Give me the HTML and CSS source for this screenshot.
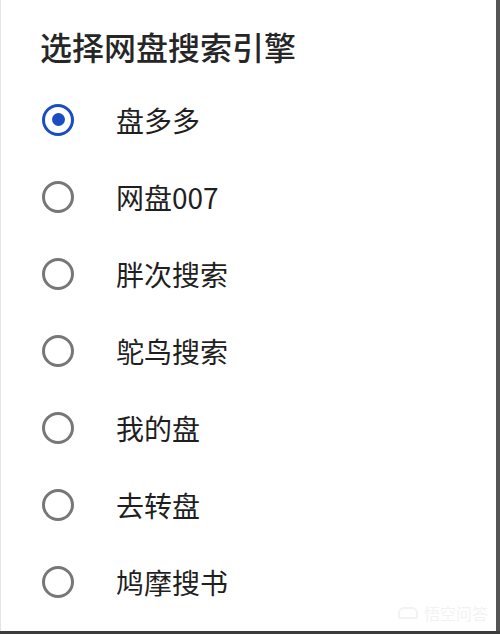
FILE: index.html
```html
<!DOCTYPE html>
<html lang="zh">
<head>
<meta charset="utf-8">
<link rel="stylesheet" href="styles.css">
</head>
<body>
<div class="frame">
  <div class="dialog">
    <h1 class="title">选择网盘搜索引擎</h1>
    <ul class="options">
      <li class="option"><span class="radio checked"></span><span class="label">盘多多</span></li>
      <li class="option"><span class="radio"></span><span class="label">网盘007</span></li>
      <li class="option"><span class="radio"></span><span class="label">胖次搜索</span></li>
      <li class="option"><span class="radio"></span><span class="label">鸵鸟搜索</span></li>
      <li class="option"><span class="radio"></span><span class="label">我的盘</span></li>
      <li class="option"><span class="radio"></span><span class="label">去转盘</span></li>
      <li class="option"><span class="radio"></span><span class="label">鸠摩搜书</span></li>
    </ul>
    <div class="watermark"><span class="wm-icon"></span>悟空问答</div>
  </div>
  <div class="edge"></div>
</div>
</body>
</html>
```
FILE: styles.css
```css
html, body {
  margin: 0;
  padding: 0;
  background: #ffffff;
}
body {
  width: 500px;
  height: 634px;
  overflow: hidden;
  font-family: "Noto Sans CJK SC", "Noto Sans", sans-serif;
  color: #1f1f1f;
}
.frame {
  display: flex;
  width: 500px;
  height: 634px;
  box-sizing: border-box;
  border-bottom: 3px solid #3c3c3c;
}
.dialog {
  position: relative;
  flex: 1;
  background: #ffffff;
  border-left: 1px solid #e4e4e4;
}
.edge {
  width: 4px;
  background: #555555;
}
.title {
  margin: 0;
  padding: 23px 0 0 39px;
  font-size: 32px;
  line-height: 46px;
  font-weight: 500;
  color: #262626;
  height: 58px;
}
.options {
  list-style: none;
  margin: 0;
  padding: 0;
}
.option {
  display: flex;
  align-items: center;
  height: 77px;
}
.radio {
  box-sizing: border-box;
  width: 32px;
  height: 32px;
  margin-left: 41px;
  border: 3px solid #777777;
  border-radius: 50%;
  display: flex;
  align-items: center;
  justify-content: center;
}
.radio.checked {
  border: 3.5px solid #1a4cc2;
}
.radio.checked::after {
  content: "";
  width: 13px;
  height: 13px;
  border-radius: 50%;
  background: #1a4cc2;
}
.label {
  margin-left: 42px;
  font-size: 28px;
  line-height: 40px;
  color: #1f1f1f;
}
.watermark {
  position: absolute;
  right: 8px;
  bottom: 8px;
  display: flex;
  align-items: center;
  gap: 6px;
  font-size: 16px;
  line-height: 20px;
  color: #f2f2f2;
}
.wm-icon {
  width: 20px;
  height: 12px;
  border-radius: 6px 6px 2px 2px;
  border: 2px solid #f2f2f2;
  box-sizing: border-box;
}
```
